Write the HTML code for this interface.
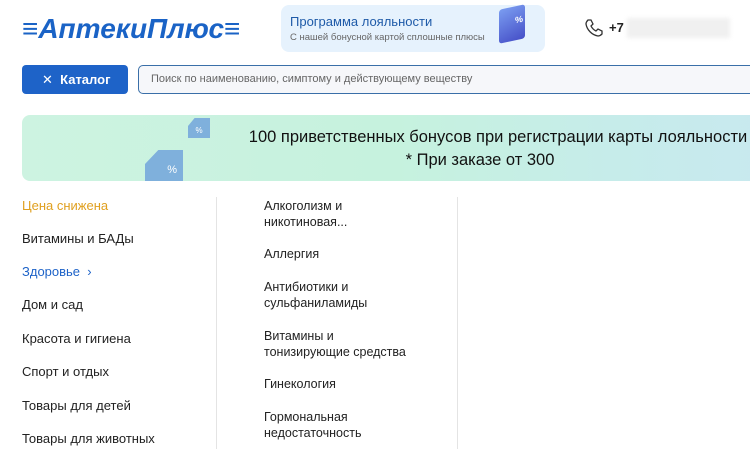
<!DOCTYPE html>
<html><head><meta charset="utf-8"><style>
*{margin:0;padding:0;box-sizing:border-box}
body{width:750px;height:449px;overflow:hidden;background:#fff;font-family:"Liberation Sans","DejaVu Sans",sans-serif;position:relative;color:#1a1a1a}
.a{position:absolute}
.logo{left:22px;top:13px;font-size:28px;font-weight:bold;font-style:italic;color:#1a63c6;letter-spacing:0px}
.loy{left:281px;top:5px;width:264px;height:47px;background:#e6f2fd;border-radius:8px}
.cat{left:22px;top:65px;width:106px;height:29px;background:#1e63c8;border-radius:4px;color:#fff;font-size:13px;font-weight:bold;line-height:29px;padding-left:20px}
.srch{left:138px;top:65px;width:620px;height:29px;border:1.5px solid #3a6fa8;border-radius:5px;background:#f6f7fa;font-size:11px;color:#666;line-height:26px;padding-left:12px}
.ban{left:22px;top:115px;width:740px;height:66px;border-radius:8px;background:linear-gradient(90deg,#cdf3e1 0%,#c6f2de 50%,#c6ecea 80%,#c8e9ef 100%)}
.bt{font-size:16.5px;color:#111;text-align:center;width:600px;left:198px}
.l{left:22px;font-size:13px;color:#222}
.m{left:264px;font-size:12.5px;color:#222;line-height:16px}
</style></head><body>
<div class="a logo">≡АптекиПлюс≡</div>
<div class="a loy"><div class="a" style="left:9px;top:9px;font-size:13px;color:#1e5aa8">Программа лояльности</div><div class="a" style="left:9px;top:27px;font-size:9.5px;color:#666">С нашей бонусной картой сплошные плюсы</div>
<div class="a" style="left:218px;top:2px;width:26px;height:34px;background:linear-gradient(160deg,#7a9cf0,#4650c8);transform:skewY(-12deg);border-radius:3px;color:#fff;font-size:9px;font-weight:bold;text-align:right;padding:9px 2px 0 0">%</div></div>
<svg class="a" style="left:584px;top:18px" width="20" height="20" viewBox="0 0 20 20"><path d="M4 2l3 0 2 4-2 2c1 2 3 4 5 5l2-2 4 2 0 3c-1 1-2 2-4 2C8 17 3 12 2 6c0-2 1-3 2-4z" fill="none" stroke="#333" stroke-width="1.3"/></svg>
<div class="a" style="left:609px;top:20px;font-size:13px;font-weight:bold;color:#222">+7</div>
<div class="a" style="left:627px;top:18px;width:103px;height:20px;background:#f0f0f0;filter:blur(2px)"></div>
<div class="a cat">✕&nbsp; Каталог</div>
<div class="a srch">Поиск по наименованию, симптому и действующему веществу</div>
<div class="a ban"></div>
<div class="a" style="left:188px;top:118px;width:22px;height:20px;background:#7fb0dc;clip-path:polygon(30% 0,100% 0,100% 100%,0 100%,0 40%);color:#fff;font-size:8px;text-align:center;padding-top:8px">%</div>
<div class="a" style="left:145px;top:150px;width:38px;height:31px;background:#7fb0dc;clip-path:polygon(35% 0,100% 0,100% 100%,0 100%,0 45%);color:#fff;font-size:11px;text-align:right;padding:14px 6px 0 0">%</div>
<div class="a bt" style="top:128px">100 приветственных бонусов при регистрации карты лояльности</div>
<div class="a bt" style="top:151px;left:180px">* При заказе от 300</div>
<div class="a" style="left:216px;top:197px;width:1px;height:252px;background:#e4e4e4"></div>
<div class="a" style="left:457px;top:197px;width:1px;height:252px;background:#e4e4e4"></div>
<div class="a l" style="top:198px;color:#e0a020">Цена снижена</div>
<div class="a l" style="top:231px">Витамины и БАДы</div>
<div class="a l" style="top:264px;color:#1e63c8">Здоровье &nbsp;›</div>
<div class="a l" style="top:297px">Дом и сад</div>
<div class="a l" style="top:331px">Красота и гигиена</div>
<div class="a l" style="top:364px">Спорт и отдых</div>
<div class="a l" style="top:398px">Товары для детей</div>
<div class="a l" style="top:431px">Товары для животных</div>
<div class="a m" style="top:198px">Алкоголизм и<br>никотиновая...</div>
<div class="a m" style="top:246px">Аллергия</div>
<div class="a m" style="top:279px">Антибиотики и<br>сульфаниламиды</div>
<div class="a m" style="top:328px">Витамины и<br>тонизирующие средства</div>
<div class="a m" style="top:376px">Гинекология</div>
<div class="a m" style="top:409px">Гормональная<br>недостаточность</div>
</body></html>
